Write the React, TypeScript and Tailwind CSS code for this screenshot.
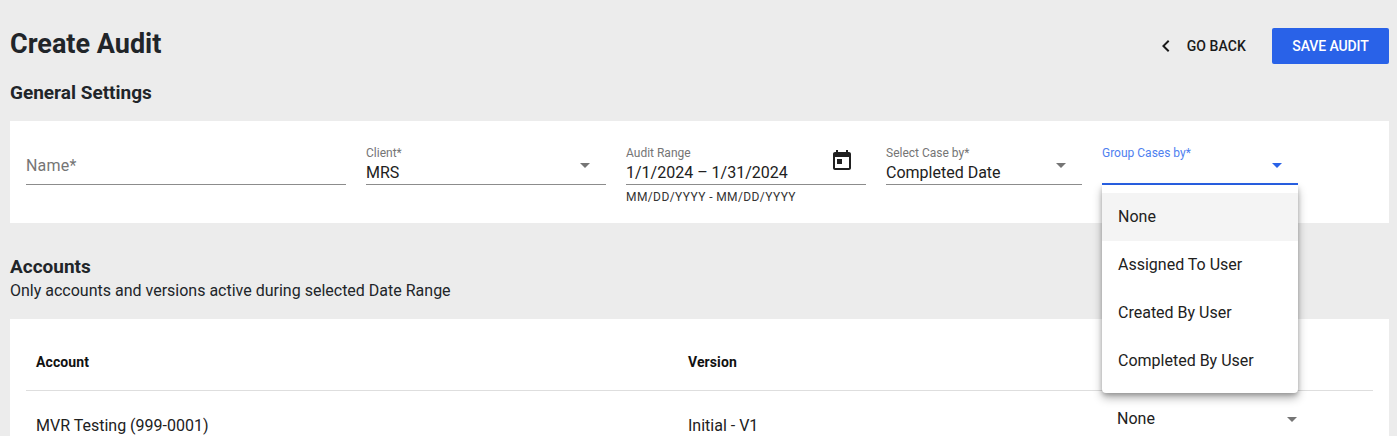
import { ReactNode } from "react";

const GROUP_OPTIONS = ["None", "Assigned To User", "Created By User", "Completed By User"];

const Caret = ({ className = "" }: { className?: string }) => (
  <svg width="10" height="5" viewBox="0 0 10 5" className={className}>
    <path d="M0 0h10L5 5z" fill="currentColor" />
  </svg>
);

function Field({
  label,
  width,
  children,
  caret,
}: {
  label: string;
  width: string;
  children: ReactNode;
  caret?: boolean;
}) {
  return (
    <div className={`relative h-[50px] shrink-0 border-b border-[#8c8c8c] ${width}`}>
      <div className="pt-[11px] text-[12px] leading-[14px] text-[#757575]">{label}</div>
      <div className="mt-[3px] text-[16px] leading-[20px] text-[#212121]">{children}</div>
      {caret && <Caret className="absolute right-[16px] top-[28px] text-[#757575]" />}
    </div>
  );
}

export default function App() {
  return (
    <div className="relative h-[436px] w-[1397px] overflow-hidden bg-[#ececec] pl-[10px] pr-[8px] font-['Roboto',sans-serif]">
      <div className="flex h-[92px] items-start justify-between pt-[28px]">
        <h1 className="text-[27px] font-bold leading-[32px] text-[#212529]">Create Audit</h1>
        <div className="flex items-center">
          <button className="flex h-[36px] items-center text-[14px] font-medium tracking-[0.1px] text-[#1a1a1a]">
            <svg width="24" height="24" viewBox="0 0 24 24" className="mr-[9px]">
              <path d="M15.400 7.400 14 6l-6 6 6 6 1.400-1.400L10.800 12z" fill="currentColor" />
            </svg>
            GO BACK
          </button>
          <button className="ml-[26px] h-[36px] w-[117px] rounded-[2px] bg-[#2962e8] text-[14px] font-medium tracking-[-0.1px] text-white">
            SAVE AUDIT
          </button>
        </div>
      </div>

      <h2 className="mt-[-11px] text-[19px] font-bold leading-[24px] text-[#212529]">General Settings</h2>

      <div className="mt-[16px] flex h-[102px] gap-[20px] bg-white pl-[16px] pt-[14px]">
        <div className="h-[50px] w-[320px] shrink-0 border-b border-[#8c8c8c] pt-[21px] text-[16px] leading-[20px] tracking-[0.2px] text-[#757575]">
          Name*
        </div>
        <Field label="Client*" width="w-[240px]" caret>
          MRS
        </Field>
        <div className="w-[240px] shrink-0">
          <div className="relative">
            <Field label="Audit Range" width="w-[240px]">
              1/1/2024 – 1/31/2024
            </Field>
            <svg width="24" height="24" viewBox="0 0 24 24" className="absolute right-[12px] top-[13px] text-[#212121]">
              <path
                d="M19 4h-1V2h-2v2H8V2H6v2H5c-1.100 0-2 .9-2 2v14c0 1.100.9 2 2 2h14c1.100 0 2-.9 2-2V6c0-1.100-.9-2-2-2zm0 16H5V9h14v11zM7 11h5v5H7z"
                fill="currentColor"
              />
            </svg>
          </div>
          <div className="mt-[5px] text-[12px] leading-[14px] tracking-[0.4px] text-[#333]">MM/DD/YYYY - MM/DD/YYYY</div>
        </div>
        <Field label="Select Case by*" width="w-[196px]" caret>
          Completed Date
        </Field>
        <div className="relative h-[50px] w-[196px] shrink-0 border-b-2 border-[#2962e8]">
          <div className="pt-[11px] text-[12px] leading-[14px] text-[#4f7ff0]">Group Cases by*</div>
          <Caret className="absolute right-[16px] top-[28px] text-[#2962e8]" />
          <div className="absolute left-0 top-[50px] z-10 w-[196px] rounded-b-[4px] bg-white py-[8px] shadow-[0_5px_10px_rgba(0,0,0,0.3),0_2px_4px_rgba(0,0,0,0.2)]">
            {GROUP_OPTIONS.map((option, index) => (
              <div
                key={option}
                className={`flex h-[48px] items-center px-[16px] text-[16px] text-[#212121] ${index === 0 ? "bg-[#f4f4f4]" : ""}`}
              >
                {option}
              </div>
            ))}
          </div>
        </div>
      </div>

      <h2 className="mt-[32px] text-[19px] font-bold leading-[24px] text-[#212529]">Accounts</h2>
      <p className="text-[16px] leading-[24px] text-[#212529]">Only accounts and versions active during selected Date Range</p>

      <div className="mt-[16px] bg-white px-[16px] pb-[20px]">
        <div className="flex h-[72px] items-end border-b border-[#dedede] pb-[20px] pl-[10px] text-[14px] font-bold leading-[16px] tracking-[0.1px] text-[#111]">
          <div className="w-[652px]">Account</div>
          <div>Version</div>
        </div>
        <div className="relative flex items-center pl-[10px] pt-[25px] text-[16px] leading-[20px] text-[#212121]">
          <div className="w-[652px]">MVR Testing (999-0001)</div>
          <div>Initial - V1</div>
          <div className="absolute left-[1091px] top-[18px] flex w-[180px] items-center justify-between text-[#212121]">
            <span>None</span>
            <Caret className="text-[#757575]" />
          </div>
        </div>
      </div>
    </div>
  );
}
